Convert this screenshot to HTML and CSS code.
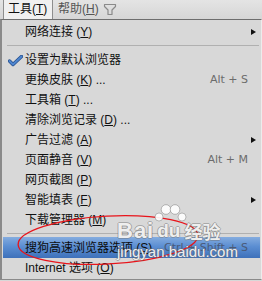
FILE: index.html
```html
<!DOCTYPE html>
<html>
<head>
<meta charset="utf-8">
<link rel="stylesheet" href="styles.css">
</head>
<body>
<div class="screen">
  <div class="menubar">
    <div class="mb-item active">工具(<u>T</u>)</div>
    <div class="mb-item">帮助(<u>H</u>)</div>
    <svg class="funnel" width="14" height="13" viewBox="0 0 14 13"><path d="M1.5 1.5H12.5V3.5L9 7V11.5H5V7L1.5 3.5Z" fill="none" stroke="#8a8a8a" stroke-width="1.2" stroke-linejoin="round"/></svg>
  </div>
  <div class="menu">
    <div class="item"><span class="gutter"></span><span class="label">网络连接 (<u>Y</u>)</span><span class="sub"><i class="arrow"></i></span></div>
    <div class="sep"></div>
    <div class="item"><span class="gutter"><svg class="check" width="15" height="12" viewBox="0 0 15 12"><path d="M1.5 6L5 9.5L13.5 1.5" fill="none" stroke="#26508f" stroke-width="3.4" stroke-linecap="round" stroke-linejoin="round"/><path d="M1.5 6L5 9.5L13.5 1.5" fill="none" stroke="#4f86cf" stroke-width="1.8" stroke-linecap="round" stroke-linejoin="round"/></svg></span><span class="label">设置为默认浏览器</span><span class="sub"></span></div>
    <div class="item"><span class="gutter"></span><span class="label">更换皮肤 (<u>K</u>) ...</span><span class="key">Alt + S</span><span class="sub"></span></div>
    <div class="item"><span class="gutter"></span><span class="label">工具箱 (<u>T</u>) ...</span><span class="sub"></span></div>
    <div class="item"><span class="gutter"></span><span class="label">清除浏览记录 (<u>D</u>) ...</span><span class="sub"></span></div>
    <div class="item"><span class="gutter"></span><span class="label">广告过滤 (<u>A</u>)</span><span class="sub"><i class="arrow"></i></span></div>
    <div class="item"><span class="gutter"></span><span class="label">页面静音 (<u>V</u>)</span><span class="key">Alt + M</span><span class="sub"></span></div>
    <div class="item"><span class="gutter"></span><span class="label">网页截图 (<u>P</u>)</span><span class="sub"></span></div>
    <div class="item"><span class="gutter"></span><span class="label">智能填表 (<u>F</u>)</span><span class="sub"><i class="arrow"></i></span></div>
    <div class="item"><span class="gutter"></span><span class="label">下载管理器 (<u>M</u>)</span><span class="sub"></span></div>
    <div class="sep"></div>
    <div class="item hl"><span class="gutter"></span><span class="label">搜狗高速浏览器选项 (<u>S</u>)</span><span class="key">Ctrl + Shift + S</span><span class="sub"></span></div>
    <div class="item"><span class="gutter"></span><span class="label">Internet 选项 (<u>O</u>)</span><span class="sub"></span></div>
  </div>
  <svg class="ellipse" width="262" height="281" viewBox="0 0 262 281"><ellipse cx="108" cy="240" rx="90" ry="24" transform="rotate(-3 108 240)" fill="none" stroke="#e8141b" stroke-width="1.3"/></svg>
  <div class="wm">
    <div class="wm-top"><span class="wm-bai">Bai</span><span class="wm-du">du<svg class="paw" width="34" height="20" viewBox="0 0 34 20"><circle cx="6" cy="13" r="4" /><circle cx="13" cy="5.5" r="4.8"/><circle cx="22" cy="5.5" r="4.8"/><circle cx="29" cy="13" r="4"/></svg></span><span class="wm-jy">经验</span></div>
    <div class="wm-url">jingyan.baidu.com</div>
  </div>
</div>
</body>
</html>
```

FILE: styles.css
```css
html, body {
  margin: 0;
  padding: 0;
  background: #d8d8d8;
}
.screen {
  position: relative;
  width: 262px;
  height: 281px;
  overflow: hidden;
  font-family: "Liberation Sans", "Noto Sans CJK SC", sans-serif;
  font-size: 12px;
  color: #111;
}
.menubar {
  height: 19px;
  display: flex;
  align-items: stretch;
  background: linear-gradient(#e4e4e4, #d6d6d6);
}
.mb-item {
  line-height: 19px;
  color: #555;
  margin-left: 5px;
}
.mb-item.active {
  margin-left: 3px;
  width: 44px;
  padding-left: 4px;
  color: #111;
  background: #f0f0f0;
  border-left: 1px solid #8e8e8e;
  border-right: 1px solid #8e8e8e;
}
.funnel {
  margin: 3px 0 0 4px;
}
.menu {
  border-top: 1px solid #6e6e6e;
  border-left: 2px solid #8a8a8a;
  border-right: 1px solid #ececec;
  border-bottom: 1px solid #8a8a8a;
  background: #d8d8d8;
  padding: 2px 0 1px;
}
.item {
  display: flex;
  align-items: center;
  height: 20px;
  line-height: 20px;
  margin: 0 1px;
  padding-left: 5px;
  white-space: nowrap;
}
.gutter {
  width: 17px;
  height: 20px;
  display: flex;
  align-items: center;
}
.check {
  margin-top: 1px;
}
.label {
  flex: 1;
}
.key {
  font-family: "DejaVu Sans", sans-serif;
  font-size: 11px;
  color: #6c6c6c;
}
.sub {
  width: 12px;
  display: flex;
  align-items: center;
}
.arrow {
  display: block;
  margin-left: 3px;
  width: 0;
  height: 0;
  border-left: 5px solid #111;
  border-top: 3.5px solid transparent;
  border-bottom: 3.5px solid transparent;
}
.sep {
  height: 1px;
  margin: 3px 2px 4px 5px;
  background: #b0b0b0;
}
.item.hl {
  height: 21px;
  margin-top: -1px;
  background: linear-gradient(#84acdf, #5b8ed2 45%, #3e71ba);
  color: #0d0d0d;
}
.item.hl .key {
  color: #4a5a78;
}
.ellipse {
  position: absolute;
  left: 0;
  top: 0;
  pointer-events: none;
}
.wm {
  position: absolute;
  left: 117px;
  top: 206px;
  color: rgba(255, 255, 255, 0.9);
  text-shadow: 1px 0 0 rgba(110, 110, 110, 0.45), -1px 0 0 rgba(110, 110, 110, 0.45), 0 1px 0 rgba(110, 110, 110, 0.45), 0 -1px 0 rgba(110, 110, 110, 0.45);
  font-family: "Liberation Sans", "Noto Sans CJK SC", sans-serif;
  pointer-events: none;
}
.wm-top {
  display: flex;
  align-items: flex-end;
  height: 36px;
}
.wm-bai {
  font-size: 22px;
  font-weight: bold;
  letter-spacing: 1px;
  line-height: 22px;
}
.wm-du {
  position: relative;
  font-size: 19px;
  font-weight: bold;
  line-height: 22px;
  padding: 0 4px 0 3px;
}
.paw {
  position: absolute;
  left: -1px;
  top: -16px;
  fill: rgba(255, 255, 255, 0.9);
  stroke: rgba(110, 110, 110, 0.45);
  stroke-width: 1;
}
.wm-jy {
  font-family: "Noto Sans CJK SC", sans-serif;
  font-size: 18px;
  font-weight: bold;
  line-height: 22px;
}
.wm-url {
  font-size: 15px;
  line-height: 18px;
  margin-top: 1px;
}
```
